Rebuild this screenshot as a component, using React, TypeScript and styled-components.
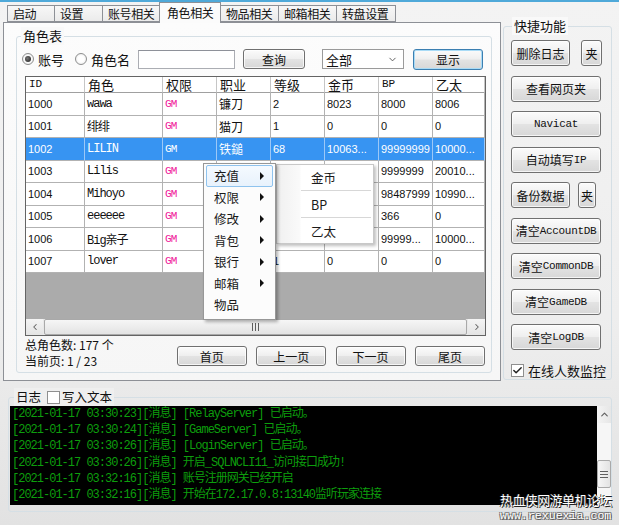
import React from 'react';
import styled, { createGlobalStyle } from 'styled-components';
import { ChevronLeft, ChevronRight, ChevronUp, ChevronDown, Check } from 'lucide-react';

const GlobalStyle = createGlobalStyle`
  html, body { margin: 0; padding: 0; }
  body {
    font-family: "Noto Sans CJK SC", "Noto Sans", sans-serif;
    font-size: 12px;
    color: #1b1b1b;
  }
  * { box-sizing: border-box; }
`;

type Row = {
  id: string;
  name: string;
  job: string;
  lv: string;
  gold: string;
  bp: string;
  eth: string;
  sel?: boolean;
};

const tabs = [
  { label: '启动', w: 48 },
  { label: '设置', w: 49 },
  { label: '账号相关', w: 58 },
  { label: '角色相关', w: 62, active: true },
  { label: '物品相关', w: 59 },
  { label: '邮箱相关', w: 59 },
  { label: '转盘设置', w: 60 },
];

const headers = ['ID', '角色', '权限', '职业', '等级', '金币', 'BP', '乙太'];

// cells hidden behind the open context menu are left empty
const rows: Row[] = [
  { id: '1000', name: 'wawa', job: '镰刀', lv: '2', gold: '8023', bp: '8000', eth: '8006' },
  { id: '1001', name: '绯绯', job: '猫刀', lv: '1', gold: '0', bp: '0', eth: '0' },
  { id: '1002', name: 'LILIN', job: '铁鎚', lv: '68', gold: '10063...', bp: '99999999', eth: '10000...', sel: true },
  { id: '1003', name: 'Lilis', job: '', lv: '', gold: '', bp: '9999999', eth: '20010...' },
  { id: '1004', name: 'Mihoyo', job: '', lv: '', gold: '', bp: '98487999', eth: '10990...' },
  { id: '1005', name: 'eeeeee', job: '', lv: '', gold: '', bp: '366', eth: '0' },
  { id: '1006', name: 'Big亲子', job: '', lv: '96', gold: '10000...', bp: '99999...', eth: '10000...' },
  { id: '1007', name: 'lover', job: '', lv: '1', gold: '0', bp: '0', eth: '0' },
];

const menuItems = [
  { label: '充值', sub: true, hot: true },
  { label: '权限', sub: true },
  { label: '修改', sub: true },
  { label: '背包', sub: true },
  { label: '银行', sub: true },
  { label: '邮箱', sub: true },
  { label: '物品' },
];

const logs = [
  '[2021-01-17 03:30:23][消息] [RelayServer] 已启动。',
  '[2021-01-17 03:30:24][消息] [GameServer] 已启动。',
  '[2021-01-17 03:30:26][消息] [LoginServer] 已启动。',
  '[2021-01-17 03:30:26][消息] 开启_SQLNCLI11_访问接口成功!',
  '[2021-01-17 03:32:16][消息] 账号注册网关已经开启',
  '[2021-01-17 03:32:16][消息] 开始在172.17.0.8:13140监听玩家连接',
];

export default function App() {
  return (
    <>
      <GlobalStyle />
      <Frame>
        <TopRow>
          <LeftCol>
            <TabStrip>
              {tabs.map((t) => (
                <Tab key={t.label} $w={t.w} $active={t.active}>
                  {t.label}
                </Tab>
              ))}
            </TabStrip>
            <TabPanel>
              <RoleGroup>
                <GroupTitle>角色表</GroupTitle>
                <ControlRow>
                  <RadioLabel>
                    <RadioDot $checked />
                    账号
                  </RadioLabel>
                  <RadioLabel $gap={11}>
                    <RadioDot />
                    角色名
                  </RadioLabel>
                  <TextBox />
                  <Button $w={62} $ml={8}>查询</Button>
                  <SelectBox>
                    全部
                    <ChevronDown size={11} strokeWidth={2} color="#555" />
                  </SelectBox>
                  <Button $w={70} $h={21} $ml={9} $default>显示</Button>
                </ControlRow>

                <Table>
                  <GridRow $h={16}>
                    {headers.map((h) => (
                      <HeadCell key={h} $mono={/^[A-Z]+$/.test(h)}>{h}</HeadCell>
                    ))}
                  </GridRow>
                  {rows.map((r) => (
                    <GridRow key={r.id} $h={22.5} $sel={r.sel}>
                      <Cell $kind="num" $sel={r.sel}>{r.id}</Cell>
                      <Cell $kind="mono" $sel={r.sel}>{r.name}</Cell>
                      <Cell $kind="gm" $sel={r.sel}>GM</Cell>
                      <Cell $kind="cjk" $sel={r.sel}>{r.job}</Cell>
                      <Cell $kind="num" $sel={r.sel}>{r.lv}</Cell>
                      <Cell $kind="num" $sel={r.sel}>{r.gold}</Cell>
                      <Cell $kind="num" $sel={r.sel}>{r.bp}</Cell>
                      <Cell $kind="num" $sel={r.sel}>{r.eth}</Cell>
                    </GridRow>
                  ))}
                  <Filler />
                  <HScroll>
                    <ScrollBtn>
                      <ChevronLeft size={10} strokeWidth={2.5} color="#606060" />
                    </ScrollBtn>
                    <HThumb>
                      <Grip />
                    </HThumb>
                    <ScrollBtn>
                      <ChevronRight size={10} strokeWidth={2.5} color="#606060" />
                    </ScrollBtn>
                  </HScroll>
                </Table>

                <Footer>
                  <Stats>
                    <div>总角色数: 177 个</div>
                    <div>当前页: 1 / 23</div>
                  </Stats>
                  <Pager>
                    <Button $w={70}>首页</Button>
                    <Button $w={70}>上一页</Button>
                    <Button $w={70}>下一页</Button>
                    <Button $w={70}>尾页</Button>
                  </Pager>
                </Footer>
              </RoleGroup>
            </TabPanel>
          </LeftCol>

          <QuickGroup>
            <GroupTitle $left={8}>快捷功能</GroupTitle>
            <QuickCol>
              <QuickRow $gap={11}>
                <Button $w={59} $h={26}>删除日志</Button>
                <Button $w={21} $h={26}>夹</Button>
              </QuickRow>
              <Button $w={90} $h={26}>查看网页夹</Button>
              <Button $w={90} $h={26}><Mono>Navicat</Mono></Button>
              <Button $w={90} $h={26}>自动填写<Mono>IP</Mono></Button>
              <QuickRow $gap={8}>
                <Button $w={59} $h={26}>备份数据</Button>
                <Button $w={18} $h={26}>夹</Button>
              </QuickRow>
              <Button $w={90} $h={26}>清空<Mono>AccountDB</Mono></Button>
              <Button $w={90} $h={26}>清空<Mono>CommonDB</Mono></Button>
              <Button $w={90} $h={26}>清空<Mono>GameDB</Mono></Button>
              <Button $w={90} $h={26}>清空<Mono>LogDB</Mono></Button>
              <CheckLine>
                <CheckBox>
                  <Check size={11} strokeWidth={3.2} color="#222" />
                </CheckBox>
                在线人数监控
              </CheckLine>
            </QuickCol>
          </QuickGroup>
        </TopRow>

        <LogGroup>
          <LogTitle>
            日志
            <CheckBox $ml={6} />
            写入文本
          </LogTitle>
          <LogArea>
            <LogBox>
              {logs.map((l, i) => (
                <LogLine key={i}>{l}</LogLine>
              ))}
            </LogBox>
            <VScroll>
              <VScrollBtn>
                <ChevronUp size={11} strokeWidth={2.5} color="#606060" />
              </VScrollBtn>
              <VTrack>
                <VThumb>
                  <Grip $vertical />
                </VThumb>
              </VTrack>
            </VScroll>
          </LogArea>
        </LogGroup>

        <ContextMenu>
          {menuItems.map((m) => (
            <MenuItem key={m.label} $hot={m.hot}>
              {m.label}
              {m.sub && <SubArrow />}
            </MenuItem>
          ))}
        </ContextMenu>
        <SubMenu>
          <SubItem>金币</SubItem>
          <SubSep />
          <SubItem>BP</SubItem>
          <SubSep />
          <SubItem>乙太</SubItem>
        </SubMenu>

        <Watermark>
          <WmTitle>热血侠网游单机论坛</WmTitle>
          <WmUrl>www.rexuexia.com</WmUrl>
        </Watermark>
      </Frame>
    </>
  );
}

const Frame = styled.div`
  position: relative;
  width: 619px;
  height: 525px;
  overflow: hidden;
  border-top: 2px solid #4fa9d9;
  background: linear-gradient(180deg, #f3f3f3 0%, #eeeeee 60%, #e2e2e2 100%);
`;

const TopRow = styled.div`
  display: flex;
  align-items: flex-start;
  height: 383px;
  padding-left: 3px;
`;

const LeftCol = styled.div`
  width: 498px;
  display: flex;
  flex-direction: column;
`;

const TabStrip = styled.div`
  display: flex;
  align-items: flex-end;
  height: 20px;
  padding-left: 5px;
`;

const Tab = styled.div<{ $w: number; $active?: boolean }>`
  position: relative;
  width: ${({ $w }) => $w}px;
  height: ${({ $active }) => ($active ? 21 : 17)}px;
  margin-left: -1px;
  margin-bottom: ${({ $active }) => ($active ? -1 : 0)}px;
  z-index: ${({ $active }) => ($active ? 2 : 1)};
  padding-left: ${({ $active }) => ($active ? 7 : 5)}px;
  border: 1px solid #8d9096;
  border-bottom: ${({ $active }) => ($active ? 'none' : '1px solid #8d9096')};
  background: ${({ $active }) =>
    $active ? '#fbfbfb' : 'linear-gradient(180deg, #f7f7f7 0%, #ebebeb 100%)'};
  font-size: 12px;
  letter-spacing: -0.4px;
  line-height: ${({ $active }) => ($active ? 19 : 15)}px;
  color: #111;
  white-space: nowrap;
`;

const TabPanel = styled.div`
  height: 359px;
  border: 1px solid #8d9096;
  background: linear-gradient(180deg, #fcfcfc 0%, #f6f6f6 100%);
  padding: 13px 0 0 12px;
`;

const GroupBox = styled.div`
  position: relative;
  border: 1px solid #d5dfe5;
  border-radius: 3px;
`;

const RoleGroup = styled(GroupBox)`
  width: 476px;
  height: 337px;
  padding: 12px 4px 0 5px;
`;

const GroupTitle = styled.span<{ $left?: number }>`
  position: absolute;
  top: -10px;
  left: ${({ $left }) => $left ?? 4}px;
  padding: 0 2px;
  background: #f9f9f9;
  font-size: 13px;
  line-height: 18px;
  color: #111;
`;

const ControlRow = styled.div`
  display: flex;
  align-items: center;
  height: 20px;
`;

const RadioLabel = styled.label<{ $gap?: number }>`
  display: flex;
  align-items: center;
  flex-shrink: 0;
  gap: 4px;
  margin-left: ${({ $gap }) => $gap ?? 0}px;
  font-size: 13px;
  color: #111;
  white-space: nowrap;
`;

const RadioDot = styled.span<{ $checked?: boolean }>`
  width: 12px;
  height: 12px;
  flex-shrink: 0;
  border-radius: 50%;
  border: 1px solid #8e8f8f;
  background: radial-gradient(circle, #ffffff 40%, #e4e4e4 100%);
  display: inline-flex;
  align-items: center;
  justify-content: center;

  &::after {
    content: '';
    width: 6px;
    height: 6px;
    border-radius: 50%;
    background: ${({ $checked }) =>
      $checked ? 'radial-gradient(circle at 40% 40%, #777, #1a1a1a)' : 'transparent'};
  }
`;

const TextBox = styled.div`
  width: 97px;
  height: 19px;
  flex-shrink: 0;
  margin-left: 8px;
  border: 1px solid #abadb3;
  border-top-color: #8e9199;
  background: #fff;
`;

const Button = styled.div<{ $w: number; $h?: number; $ml?: number; $default?: boolean }>`
  width: ${({ $w }) => $w}px;
  height: ${({ $h }) => $h ?? 20}px;
  margin-left: ${({ $ml }) => $ml ?? 0}px;
  flex-shrink: 0;
  display: flex;
  align-items: center;
  justify-content: center;
  border: 1px solid ${({ $default }) => ($default ? '#3c7fb1' : '#707070')};
  border-radius: 3px;
  background: linear-gradient(180deg, #fbfbfb 0%, #efefef 48%, #e3e3e3 52%, #d7d7d7 100%);
  box-shadow: inset 0 0 0 1px ${({ $default }) => ($default ? '#a9dbf6' : 'rgba(255,255,255,0.75)')};
  font-size: 12px;
  color: #111;
  white-space: nowrap;
`;

const Mono = styled.span`
  font-family: "Liberation Mono", monospace;
  font-size: 11px;
  letter-spacing: -0.3px;
`;

const SelectBox = styled.div`
  width: 82px;
  height: 20px;
  flex-shrink: 0;
  margin-left: 17px;
  display: flex;
  align-items: center;
  justify-content: space-between;
  padding: 0 5px 0 3px;
  border: 1px solid #9a9a9a;
  background: #fff;
  font-size: 13px;
  color: #111;
`;

const Table = styled.div`
  display: flex;
  flex-direction: column;
  width: 461px;
  height: 260px;
  margin: 7px 0 0 3px;
  border: 1px solid #646464;
  background: #ababab;
  overflow: hidden;
`;

const GridRow = styled.div<{ $h: number; $sel?: boolean }>`
  display: grid;
  grid-template-columns: 59px 78px 54px 54px 54px 54px 54px 52px;
  height: ${({ $h }) => $h}px;
  flex-shrink: 0;
  background: ${({ $sel }) => ($sel ? '#3794f2' : '#ffffff')};
`;

const HeadCell = styled.div<{ $mono?: boolean }>`
  display: flex;
  align-items: center;
  padding-left: 3px;
  border-right: 1px solid #c6c6c6;
  border-bottom: 1px solid #a0a0a0;
  font-family: ${({ $mono }) =>
    $mono ? '"Liberation Mono", monospace' : '"Noto Sans CJK SC", sans-serif'};
  font-size: ${({ $mono }) => ($mono ? 11 : 13)}px;
  line-height: 1;
  color: #111;
`;

const cellFonts = {
  num: 'font-family: "Liberation Sans", sans-serif; font-size: 11px;',
  mono: 'font-family: "Liberation Mono", "Noto Sans CJK SC", monospace; font-size: 12px; letter-spacing: -1px;',
  gm: 'font-family: "Liberation Mono", monospace; font-size: 11px; letter-spacing: -0.8px;',
  cjk: 'font-family: "Noto Sans CJK SC", sans-serif; font-size: 12px;',
};

const Cell = styled.div<{ $kind: keyof typeof cellFonts; $sel?: boolean }>`
  display: flex;
  align-items: center;
  padding-left: 2px;
  overflow: hidden;
  white-space: nowrap;
  border-right: 1px solid ${({ $sel }) => ($sel ? '#9cc8f7' : '#b2b2b2')};
  border-bottom: 1px solid #b2b2b2;
  ${({ $kind }) => cellFonts[$kind]}
  color: ${({ $kind, $sel }) => ($sel ? '#ffffff' : $kind === 'gm' ? '#f0189a' : '#111')};
`;

const Filler = styled.div`
  flex: 1;
  background: #ababab;
`;

const HScroll = styled.div`
  display: flex;
  height: 16px;
  flex-shrink: 0;
  background: #e8e8e8;
`;

const ScrollBtn = styled.div`
  width: 17px;
  display: flex;
  align-items: center;
  justify-content: center;
  background: linear-gradient(180deg, #f4f4f4, #e4e4e4);
`;

const HThumb = styled.div`
  flex: 1;
  margin: 0 1px;
  display: flex;
  align-items: center;
  justify-content: center;
  border: 1px solid #a9a9a9;
  border-radius: 2px;
  background: linear-gradient(180deg, #f6f6f6 0%, #e3e3e3 100%);
`;

const Grip = styled.span<{ $vertical?: boolean }>`
  width: ${({ $vertical }) => ($vertical ? 8 : 7)}px;
  height: ${({ $vertical }) => ($vertical ? 7 : 8)}px;
  background: repeating-linear-gradient(
    ${({ $vertical }) => ($vertical ? '180deg' : '90deg')},
    #5f5f5f 0 1px,
    transparent 1px 3px
  );
`;

const Footer = styled.div`
  display: flex;
  justify-content: space-between;
  margin: 1px 2px 0 3px;
`;

const Stats = styled.div`
  font-size: 12px;
  line-height: 16px;
  color: #111;
`;

const Pager = styled.div`
  display: flex;
  gap: 9.4px;
  margin-top: 9px;
`;

const QuickGroup = styled(GroupBox)`
  width: 109px;
  height: 354px;
  margin: 24px 0 0 2px;
  padding: 13px 0 0 7px;
`;

const QuickCol = styled.div`
  display: flex;
  flex-direction: column;
  gap: 9.5px;
`;

const QuickRow = styled.div<{ $gap: number }>`
  display: flex;
  gap: ${({ $gap }) => $gap}px;
`;

const CheckLine = styled.div`
  display: flex;
  align-items: center;
  gap: 2px;
  margin-top: 1px;
  font-size: 13px;
  color: #111;
`;

const CheckBox = styled.span<{ $ml?: number }>`
  width: 13px;
  height: 13px;
  margin-left: ${({ $ml }) => $ml ?? 0}px;
  margin-right: 2px;
  display: inline-flex;
  align-items: center;
  justify-content: center;
  border: 1px solid #8f8f8f;
  background: #fff;
`;

const LogGroup = styled(GroupBox)`
  width: 604px;
  height: 115px;
  margin: 12px 0 0 8px;
  padding: 8px 0 0 1px;
`;

const LogTitle = styled.div`
  position: absolute;
  top: -10px;
  left: 5px;
  display: flex;
  align-items: center;
  padding: 0 2px;
  background: #efefef;
  font-size: 12.5px;
  line-height: 18px;
  color: #111;
`;

const LogArea = styled.div`
  display: flex;
  height: 99px;
`;

const LogBox = styled.div`
  width: 588px;
  background: #000;
  padding: 0 0 0 2px;
`;

const LogLine = styled.div`
  font-family: "Liberation Mono", "Noto Sans CJK SC", monospace;
  font-size: 12px;
  letter-spacing: -1px;
  line-height: 16.2px;
  color: #0d9e0d;
  white-space: nowrap;
`;

const VScroll = styled.div`
  width: 14px;
  display: flex;
  flex-direction: column;
  background: #eaeaea;
`;

const VScrollBtn = styled.div`
  height: 17px;
  display: flex;
  align-items: center;
  justify-content: center;
  background: linear-gradient(90deg, #f4f4f4, #e6e6e6);
`;

const VTrack = styled.div`
  flex: 1;
  padding-top: 37px;
  background: #f6f6f6;
`;

const VThumb = styled.div`
  height: 28px;
  display: flex;
  align-items: center;
  justify-content: center;
  border: 1px solid #a9a9a9;
  border-radius: 2px;
  background: linear-gradient(90deg, #f6f6f6 0%, #e3e3e3 100%);
`;

const ContextMenu = styled.div`
  position: absolute;
  left: 203px;
  top: 161px;
  width: 73px;
  height: 157px;
  padding: 1px 2px 5px;
  border: 1px solid #979797;
  background: #fcfcfc;
  box-shadow: 2px 2px 3px rgba(0, 0, 0, 0.3);
  z-index: 5;
`;

const MenuItem = styled.div<{ $hot?: boolean }>`
  display: flex;
  align-items: center;
  height: 21.5px;
  padding: 0 8px 0 7px;
  border: 1px solid ${({ $hot }) => ($hot ? '#8fc3ee' : 'transparent')};
  border-radius: 2px;
  background: ${({ $hot }) => ($hot ? 'linear-gradient(180deg, #f5faff, #e8f2fc)' : 'transparent')};
  font-size: 12.5px;
  color: #1a1a1a;
`;

const SubArrow = styled.span`
  margin-left: auto;
  width: 0;
  height: 0;
  border-top: 4px solid transparent;
  border-bottom: 4px solid transparent;
  border-left: 4px solid #111;
`;

const SubMenu = styled.div`
  position: absolute;
  left: 276px;
  top: 162px;
  width: 98px;
  height: 80px;
  padding: 0 2px 0 0;
  border: 1px solid #c8c8c8;
  background: linear-gradient(90deg, #f0f0f0 0px, #fafafa 23px, #ffffff 24px);
  box-shadow: 2px 2px 3px rgba(0, 0, 0, 0.25);
  z-index: 4;
`;

const SubItem = styled.div`
  height: 24px;
  display: flex;
  align-items: center;
  padding-left: 34px;
  font-size: 12.5px;
  color: #1a1a1a;
`;

const SubSep = styled.div`
  height: 3px;
  margin-left: 24px;
  border-top: 1px solid transparent;
  background: linear-gradient(180deg, #d7d7d7 0 1px, #ffffff 1px 2px, transparent 2px);
`;

const Watermark = styled.div`
  position: absolute;
  left: 500px;
  top: 489px;
  width: 119px;
  z-index: 6;
`;

const WmTitle = styled.div`
  font-size: 13px;
  letter-spacing: -0.6px;
  line-height: 18px;
  color: #fff;
  text-shadow: 1px 1px 0 #222, -1px 0 0 #333;
  white-space: nowrap;
`;

const WmUrl = styled.div`
  font-family: "Liberation Mono", monospace;
  font-size: 11.6px;
  line-height: 13px;
  color: #fff;
  text-shadow: 1px 1px 0 #555, -1px -1px 0 #777, 1px -1px 0 #777, -1px 1px 0 #777;
  white-space: nowrap;
`;
